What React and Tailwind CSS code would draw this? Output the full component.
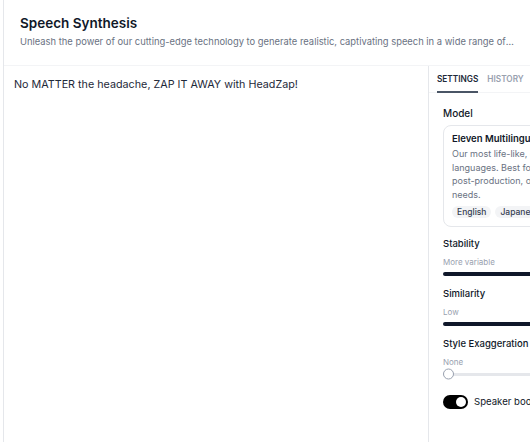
import React, { useState } from "react";

const languages = ["English", "Japanese", "Chinese", "German", "Hindi", "French"];

function Slider({ label, hint, filled }) {
  return (
    <div className="mb-[6px]">
      <div className="text-[9.5px] font-medium leading-4 text-gray-900">{label}</div>
      <div className="mt-1 text-[8px] leading-3 text-gray-400">{hint}</div>
      <div className="relative flex h-3 items-center">
        {filled ? (
          <div className="h-1 w-full rounded-full bg-[#0f172a]" />
        ) : (
          <>
            <div className="h-[3px] w-full rounded-full bg-gray-200" />
            <div className="absolute left-0 top-1/2 h-[11px] w-[11px] -translate-y-1/2 rounded-full border border-gray-400 bg-white" />
          </>
        )}
      </div>
    </div>
  );
}

export default function App() {
  const [tab, setTab] = useState("settings");
  const [boost, setBoost] = useState(true);

  return (
    <div className="h-[442px] overflow-hidden bg-white font-['Inter',sans-serif] text-gray-900">
      <div className="ml-[3px] flex h-full flex-col border-l border-gray-200">
        <header className="border-b border-gray-100 px-4 pb-[15px] pt-3">
          <h1 className="text-[13.5px] font-semibold leading-[22px] text-gray-900">Speech Synthesis</h1>
          <p className="truncate text-[9.4px] leading-4 text-gray-500">
            Unleash the power of our cutting-edge technology to generate realistic, captivating speech in a wide range of languages.
          </p>
        </header>

        <div className="flex min-h-0 flex-1">
          <div className="w-[425px] shrink-0 border-r border-gray-200 px-[10px] pt-[9px]">
            <p className="text-[10.75px] leading-5 text-gray-800">No MATTER the headache, ZAP IT AWAY with HeadZap!</p>
          </div>

          <aside className="w-[248px] shrink-0">
            <div className="flex gap-[9px] border-b border-gray-100 px-2">
              <button
                onClick={() => setTab("settings")}
                className={`-mb-px border-b-2 pb-[5px] pt-[6px] text-[8.25px] font-semibold leading-[14px] ${
                  tab === "settings" ? "border-gray-600 text-gray-800" : "border-transparent text-gray-400"
                }`}
              >
                SETTINGS
              </button>
              <button
                onClick={() => setTab("history")}
                className={`-mb-px border-b-2 pb-[5px] pt-[6px] text-[8.25px] font-semibold leading-[14px] ${
                  tab === "history" ? "border-gray-600 text-gray-800" : "border-transparent text-gray-400"
                }`}
              >
                HISTORY
              </button>
            </div>

            <div className="px-[14px] pt-3">
              <div className="text-[10px] font-medium leading-4">Model</div>
              <div className="mt-1 rounded-lg border border-gray-200 px-2 pb-2 pt-1.5">
                <div className="text-[9.5px] font-semibold leading-[13px]">Eleven Multilingual v2</div>
                <p className="mt-[2px] text-[9px] leading-[13.5px] text-gray-500">
                  Our most life-like, emotionally rich mode in 29 languages. Best for voice overs, audiobooks, post-production, or any other content creation needs.
                </p>
                <div className="mt-[5px] flex gap-1">
                  {languages.map((l) => (
                    <span key={l} className="rounded-full bg-gray-100 px-[5px] text-[8.5px] font-medium leading-3 text-gray-700">
                      {l}
                    </span>
                  ))}
                </div>
              </div>

              <div className="mt-[9px]">
                <Slider label="Stability" hint="More variable" filled />
                <Slider label="Similarity" hint="Low" filled />
                <Slider label="Style Exaggeration" hint="None" />
              </div>

              <div className="mt-[14px] flex items-center gap-[6px]">
                <button
                  onClick={() => setBoost(!boost)}
                  className={`flex h-[14px] w-[25px] items-center rounded-full px-[2px] ${
                    boost ? "justify-end bg-black" : "justify-start bg-gray-300"
                  }`}
                >
                  <span className="h-[10px] w-[10px] rounded-full bg-white" />
                </button>
                <span className="text-[9.6px] leading-4">Speaker boost</span>
              </div>
            </div>
          </aside>
        </div>
      </div>
    </div>
  );
}
